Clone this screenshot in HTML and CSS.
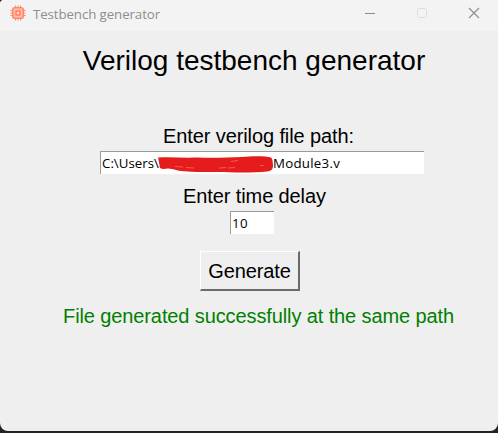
FILE: index.html
```html
<!DOCTYPE html>
<html lang="en">
<head>
<meta charset="utf-8">
<title>Testbench generator</title>
<link rel="stylesheet" href="styles.css">
</head>
<body>
<div class="window">
  <header class="titlebar">
    <svg class="chip" width="16" height="16" viewBox="0 0 16 16" fill="none" stroke="#ff8a6b">
      <path d="M5.5 0.5v15M8 0.5v15M10.5 0.5v15M0.5 5.5h15M0.5 8h15M0.5 10.5h15" stroke-width="1.1"/>
      <rect x="2.8" y="2.8" width="10.4" height="10.4" rx="2" fill="#ffc0ad" stroke-width="1.6"/>
      <rect x="6" y="6" width="4" height="4" fill="#ffd5c8" stroke="#ff7752" stroke-width="1.3"/>
    </svg>
    <span class="caption">Testbench generator</span>
    <div class="controls">
      <svg width="12" height="12" viewBox="0 0 12 12"><path d="M1 6.500h10" stroke="#8c8c8c"/></svg>
      <svg width="12" height="12" viewBox="0 0 12 12"><rect x="1.500" y="1.500" width="9" height="9" rx="1" fill="none" stroke="#dedede"/></svg>
      <svg width="12" height="12" viewBox="0 0 12 12"><path d="M1 1l10 10M11 1L1 11" stroke="#8c8c8c" stroke-width="1.1"/></svg>
    </div>
  </header>
  <main class="content">
    <h1 class="title">Verilog testbench generator</h1>
    <label class="label path-label">Enter verilog file path:</label>
    <div class="entry path">
      <span class="path-start">C:\Users\</span>
      <svg class="scribble" width="115" height="17" viewBox="0 0 115 17">
        <path d="M0 1.500C14 1 26 2 40 1.500C56 2.500 72 1 84 1C94 0 108 0 113 1.500C115 3 114.500 6 115 9C115 13 114 15 109 15.500C96 17 72 16.500 60 16C46 16 30 16 23 15C17 14 16 13 10 12.500C4 13.500 1 13 1.500 9Z" fill="#e61c1c"/>
        <path d="M17 10.500l8 .5M28 11.500l8 .5M61 12l7-.5M70 12l7-.5M73 5.500l7-1M102 9.500h4" stroke="#f08a8a" stroke-width=".6" fill="none"/>
      </svg>
      <span class="path-end">Module3.v</span>
    </div>
    <label class="label delay-label">Enter time delay</label>
    <div class="entry delay">10</div>
    <button class="generate">Generate</button>
    <p class="label status">File generated successfully at the same path</p>
  </main>
</div>
</body>
</html>
```
FILE: styles.css
```css
* { box-sizing: border-box; }
body {
  margin: 0;
  width: 498px;
  height: 433px;
  overflow: hidden;
  background: #242122;
}
.window {
  width: 498px;
  height: 431px;
  display: flex;
  flex-direction: column;
  background: #efefef;
  border-radius: 4px 0 8px 8px;
  overflow: hidden;
}
.titlebar {
  height: 31px;
  display: flex;
  align-items: flex-start;
  padding: 5px 18px 0 10px;
  background: #f3f3f3;
}
.caption {
  margin-left: 7px;
  font: 13.3px/18px "Open Sans", sans-serif;
  letter-spacing: -0.1px;
  color: #8e8e8e;
  white-space: nowrap;
}
.controls {
  display: flex;
  gap: 40px;
  margin: 2px 0 0 auto;
}
.content {
  display: flex;
  flex-direction: column;
  align-items: center;
  font-family: "Liberation Sans", Arial, sans-serif;
  color: #000;
}
.title {
  margin: 14px 0 0 10px;
  font-size: 28px;
  font-weight: 400;
  line-height: 32px;
  white-space: nowrap;
}
.label {
  font-size: 20px;
  line-height: 24px;
  letter-spacing: -0.11px;
  white-space: nowrap;
}
.path-label { margin: 47px 0 0 19px; }
.entry {
  background: #fff;
  height: 23px;
  border-top: 1px solid #9b9b9b;
  border-left: 1px solid #9b9b9b;
  font: 13.3px/22px "Open Sans", sans-serif;
  padding-left: 1px;
}
.path {
  width: 324px;
  margin: 3px 0 0 26px;
  display: flex;
}
.path-start { width: 56px; white-space: nowrap; }
.scribble { margin-top: 4px; flex: none; }
.path-end { letter-spacing: 0.25px; white-space: nowrap; }
.delay-label { margin: 10px 0 0 11px; }
.delay { width: 44px; margin: 3px 0 0 6px; letter-spacing: 0.3px; }
.generate {
  width: 100px;
  height: 40px;
  margin: 17px 0 0 2px;
  padding: 0;
  border: 1px solid #fff;
  border-right: 2px solid #6b6b6b;
  border-bottom: 2px solid #6b6b6b;
  background: #efefef;
  color: #000;
  font: 20px/24px "Liberation Sans", Arial, sans-serif;
  letter-spacing: -0.1px;
}
.status { margin: 13px 0 0 19px; color: #008000; }
```
